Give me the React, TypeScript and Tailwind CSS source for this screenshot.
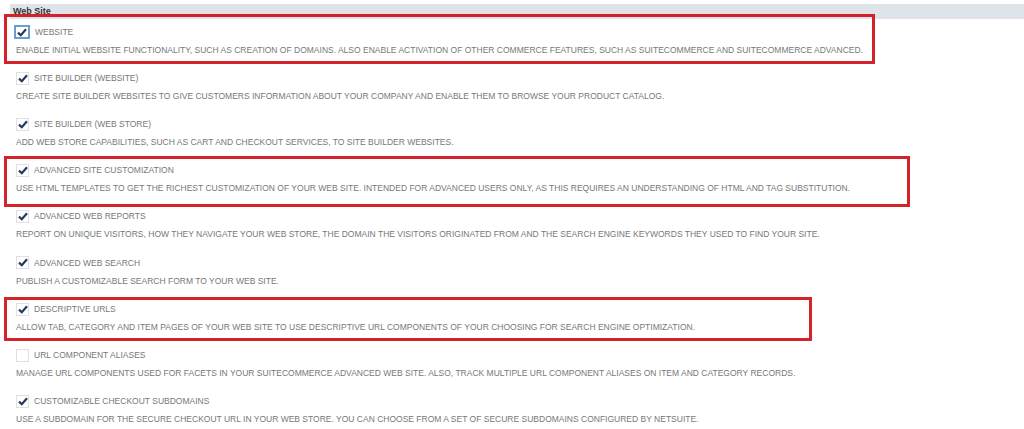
import React from "react";

type Feature = {
  title: string;
  desc: string;
  checked: boolean;
  focused?: boolean;
  // outline drawn around the row: offsets relative to the row box
  mark?: { top: number; width: number; height: number };
};

const features: Feature[] = [
  {
    title: "WEBSITE",
    desc: "ENABLE INITIAL WEBSITE FUNCTIONALITY, SUCH AS CREATION OF DOMAINS. ALSO ENABLE ACTIVATION OF OTHER COMMERCE FEATURES, SUCH AS SUITECOMMERCE AND SUITECOMMERCE ADVANCED.",
    checked: true,
    focused: true,
    mark: { top: -9, width: 871, height: 50 },
  },
  {
    title: "SITE BUILDER (WEBSITE)",
    desc: "CREATE SITE BUILDER WEBSITES TO GIVE CUSTOMERS INFORMATION ABOUT YOUR COMPANY AND ENABLE THEM TO BROWSE YOUR PRODUCT CATALOG.",
    checked: true,
  },
  {
    title: "SITE BUILDER (WEB STORE)",
    desc: "ADD WEB STORE CAPABILITIES, SUCH AS CART AND CHECKOUT SERVICES, TO SITE BUILDER WEBSITES.",
    checked: true,
  },
  {
    title: "ADVANCED SITE CUSTOMIZATION",
    desc: "USE HTML TEMPLATES TO GET THE RICHEST CUSTOMIZATION OF YOUR WEB SITE. INTENDED FOR ADVANCED USERS ONLY, AS THIS REQUIRES AN UNDERSTANDING OF HTML AND TAG SUBSTITUTION.",
    checked: true,
    mark: { top: -6, width: 906, height: 51 },
  },
  {
    title: "ADVANCED WEB REPORTS",
    desc: "REPORT ON UNIQUE VISITORS, HOW THEY NAVIGATE YOUR WEB STORE, THE DOMAIN THE VISITORS ORIGINATED FROM AND THE SEARCH ENGINE KEYWORDS THEY USED TO FIND YOUR SITE.",
    checked: true,
  },
  {
    title: "ADVANCED WEB SEARCH",
    desc: "PUBLISH A CUSTOMIZABLE SEARCH FORM TO YOUR WEB SITE.",
    checked: true,
  },
  {
    title: "DESCRIPTIVE URLS",
    desc: "ALLOW TAB, CATEGORY AND ITEM PAGES OF YOUR WEB SITE TO USE DESCRIPTIVE URL COMPONENTS OF YOUR CHOOSING FOR SEARCH ENGINE OPTIMIZATION.",
    checked: true,
    mark: { top: -3, width: 808, height: 44 },
  },
  {
    title: "URL COMPONENT ALIASES",
    desc: "MANAGE URL COMPONENTS USED FOR FACETS IN YOUR SUITECOMMERCE ADVANCED WEB SITE. ALSO, TRACK MULTIPLE URL COMPONENT ALIASES ON ITEM AND CATEGORY RECORDS.",
    checked: false,
  },
  {
    title: "CUSTOMIZABLE CHECKOUT SUBDOMAINS",
    desc: "USE A SUBDOMAIN FOR THE SECURE CHECKOUT URL IN YOUR WEB STORE. YOU CAN CHOOSE FROM A SET OF SECURE SUBDOMAINS CONFIGURED BY NETSUITE.",
    checked: true,
  },
];

function Checkbox({ checked, focused }: { checked: boolean; focused?: boolean }) {
  return (
    <span
      className={
        focused
          ? "-ml-[2px] flex h-[14px] w-[16px] items-center justify-center border-2 border-[#6c9bd2] bg-white"
          : "flex h-[13px] w-[13px] items-center justify-center border border-[#e0e0e0] bg-white"
      }
    >
      {checked && (
        <svg width="10" height="9" viewBox="0 0 10 9">
          <path d="M1 4.6 L3.8 7.2 L9 1.2" fill="none" stroke="#25395e" strokeWidth="2.2" />
        </svg>
      )}
    </span>
  );
}

function FeatureRow({ f }: { f: Feature }) {
  return (
    <div className="relative h-[46.2px] pl-[16px]">
      <div className="flex h-[18px] items-center gap-[5px]">
        <Checkbox checked={f.checked} focused={f.focused} />
        <span className="text-[8.5px] text-[#777]">{f.title}</span>
      </div>
      <div className="flex h-[18px] items-center whitespace-nowrap text-[8.5px] text-[#777]">
        {f.desc}
      </div>
      {f.mark && (
        <div
          className="pointer-events-none absolute left-[4px] border-[3px] border-[#d3222a]"
          style={{ top: f.mark.top, width: f.mark.width, height: f.mark.height }}
        />
      )}
    </div>
  );
}

export default function App() {
  return (
    <div className="h-[429px] w-full overflow-hidden bg-white font-['Liberation_Sans',Arial,sans-serif]">
      <div className="ml-[10px] mt-[4px] flex h-[15px] items-center bg-[#dfe3ea] pl-[3px] text-[9px] font-bold text-[#333]">
        Web Site
      </div>
      <div className="mt-[4px]">
        {features.map((f) => (
          <FeatureRow key={f.title} f={f} />
        ))}
      </div>
    </div>
  );
}
